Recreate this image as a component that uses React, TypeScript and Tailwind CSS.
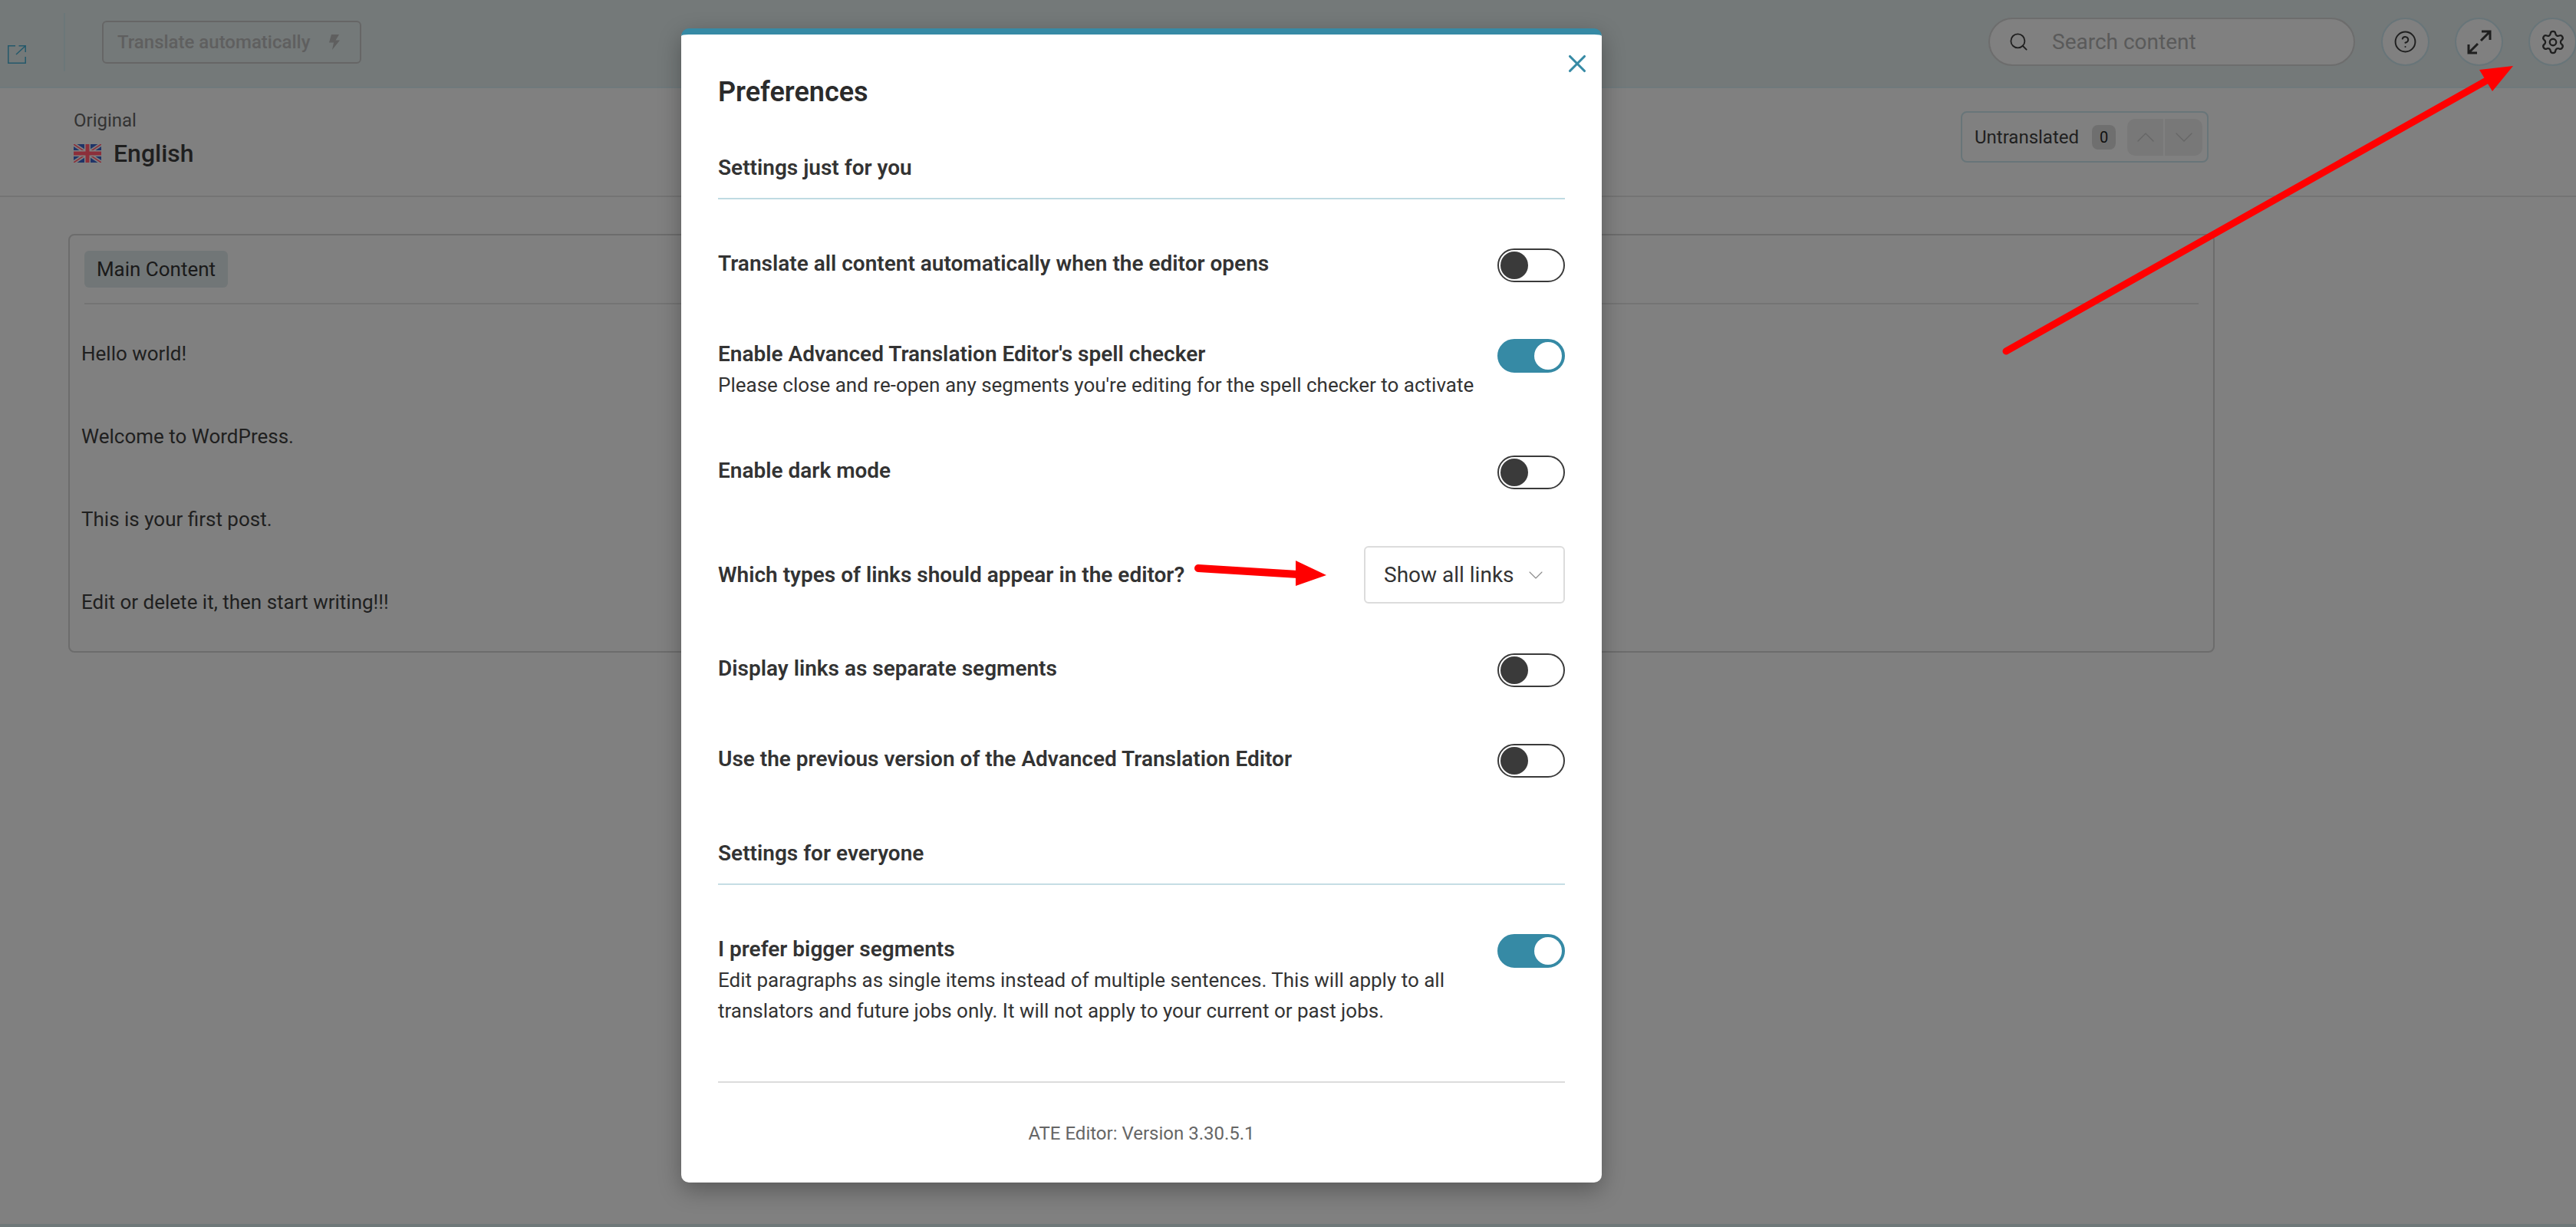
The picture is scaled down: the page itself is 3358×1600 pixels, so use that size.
import React from 'react';
import { ChevronDown, ChevronUp, CircleHelp, Search, Settings, X } from 'lucide-react';

const Toggle: React.FC<{ on?: boolean }> = ({ on }) => (
  <div
    className={`shrink-0 w-[88px] h-[44px] rounded-full border-2 p-[2px] flex ${
      on ? 'bg-[#368aa5] border-[#368aa5] justify-end' : 'bg-white border-[#3a3a3a] justify-start'
    }`}
  >
    <div className={`w-[36px] h-[36px] rounded-full ${on ? 'bg-white' : 'bg-[#3a3a3a]'}`} />
  </div>
);

const Row: React.FC<{ label: string; on?: boolean; className: string; children?: React.ReactNode }> = ({
  label,
  on,
  className,
  children,
}) => (
  <div className={`flex justify-between items-start ${className}`}>
    <div className="w-[960px]">
      <div className="text-[28px] leading-[40px] font-semibold text-[#333333] whitespace-nowrap">{label}</div>
      {children && <div className="text-[26px] leading-[40px] text-[#333333]">{children}</div>}
    </div>
    <Toggle on={on} />
  </div>
);

const Flag = () => (
  <svg width="36" height="24" viewBox="0 0 36 24" className="shrink-0">
    <rect width="36" height="24" fill="#1f3468" />
    <path d="M0 0L36 24M36 0L0 24" stroke="#808080" strokeWidth="5" />
    <path d="M0 0L36 24M36 0L0 24" stroke="#8c2f3a" strokeWidth="1.6" />
    <path d="M18 0V24M0 12H36" stroke="#808080" strokeWidth="8" />
    <path d="M18 0V24M0 12H36" stroke="#8c2f3a" strokeWidth="5" />
  </svg>
);

const segments = ['Hello world!', 'Welcome to WordPress.', 'This is your first post.', 'Edit or delete it, then start writing!!!'];

export default function App() {
  return (
    <div className="relative w-[3358px] h-[1600px] overflow-hidden bg-[#808080] font-['Roboto',sans-serif] text-[26px] text-[#1f1f1f]">
      {/* top bar */}
      <div className="h-[115px] bg-[#747979] border-b-2 border-[#6f797c] flex items-start pl-[10px]">
        <svg width="24" height="24" viewBox="0 0 24 24" fill="none" stroke="#24596b" strokeWidth="1.5" className="mt-[59px] shrink-0">
          <path d="M10 .8H.8V23.2H23.2V15" />
          <path d="M11 12L23 1M14.5 .8H23.2V9" />
        </svg>
        <div className="ml-[49px] mt-[17px] w-[2px] h-[76px] bg-[#6c7779]" />
        <div className="ml-[48px] mt-[27px] w-[338px] h-[56px] rounded-[6px] border-2 border-[#666666] flex items-center justify-between pl-[18px] pr-[26px]">
          <span className="text-[24px] font-medium text-[#5f5f5f]">Translate automatically</span>
          <svg width="15" height="20" viewBox="0 0 15 20" fill="#5f5f5f">
            <path d="M4 0H14L9.5 7.5H15L5 20L7 10.5H1Z" />
          </svg>
        </div>
        <div className="ml-auto mr-[-1px] mt-[23px] flex items-center">
          <div className="w-[478px] h-[63px] rounded-full border-2 border-[#6d6d6d] bg-[#808080] flex items-center pl-[24px]">
            <Search size={27} strokeWidth={1.6} className="text-[#1f1f1f] shrink-0" />
            <span className="ml-[30px] text-[28px] text-[#5a5a5a]">Search content</span>
          </div>
          <div className="ml-[34px] w-[63px] h-[63px] rounded-full border-2 border-[#687579] bg-[#808080] flex items-center justify-center">
            <CircleHelp size={31} strokeWidth={1.5} className="text-[#1f1f1f]" />
          </div>
          <div className="ml-[33px] w-[63px] h-[63px] rounded-full border-2 border-[#687579] bg-[#808080] flex items-center justify-center">
            <svg width="32" height="32" viewBox="0 0 32 32" fill="none" stroke="#1f1f1f" strokeWidth="3">
              <path d="M18 14L30 2M19 2H30V13" />
              <path d="M14 18L2 30M13 30H2V19" />
            </svg>
          </div>
          <div className="ml-[33px] w-[63px] h-[63px] rounded-full border-2 border-[#687579] bg-[#808080] flex items-center justify-center">
            <Settings size={34} strokeWidth={1.6} className="text-[#1f1f1f]" />
          </div>
        </div>
      </div>

      {/* language row */}
      <div className="h-[142px] border-b-2 border-[#747474] pl-[96px] pr-[479px] flex justify-between">
        <div>
          <div className="mt-[26px] text-[24px] leading-[32px] text-[#333333]">Original</div>
          <div className="mt-[7px] flex items-center gap-[16px]">
            <Flag />
            <span className="text-[32px] leading-[40px] font-medium text-[#1f1f1f]">English</span>
          </div>
        </div>
        <div className="mt-[30px] w-[323px] h-[67px] rounded-[8px] border-2 border-[#687579] flex items-center pl-[16px]">
          <span className="text-[24px] text-[#1f1f1f]">Untranslated</span>
          <span className="ml-[17px] w-[31px] h-[32px] rounded-[8px] bg-[#6f6f6f] flex items-center justify-center text-[20px] text-[#111111]">0</span>
          <div className="ml-[15px] w-[98px] h-[48px] rounded-[10px] bg-[#787878] flex">
            <div className="w-1/2 border-r-2 border-[#808080] flex items-center justify-center">
              <ChevronUp size={40} strokeWidth={0.8} className="text-[#666666]" />
            </div>
            <div className="w-1/2 flex items-center justify-center">
              <ChevronDown size={40} strokeWidth={0.8} className="text-[#666666]" />
            </div>
          </div>
        </div>
      </div>

      {/* content box */}
      <div className="ml-[89px] mt-[48px] w-[2798px] h-[546px] rounded-[8px] border-2 border-[#6c6c6c] px-[19px] pt-[20px]">
        <div className="border-b-2 border-[#747474] h-[70px]">
          <span className="inline-block w-[187px] h-[48px] rounded-[6px] bg-[#717677] text-center leading-[48px] text-[26px] text-[#1a1a1a]">
            Main Content
          </span>
        </div>
        <div className="mt-[44px] -ml-[4px] flex flex-col gap-[68px]">
          {segments.map(s => (
            <div key={s} className="leading-[40px] text-[#1f1f1f]">
              {s}
            </div>
          ))}
        </div>
      </div>

      {/* bottom edge of the page */}
      <div className="absolute left-0 right-0 bottom-0 h-[4px] bg-[#6f7879]" />

      {/* dialog */}
      <div className="absolute left-[888px] top-[37px] w-[1200px] h-[1505px] bg-white rounded-[10px] border-t-[8px] border-[#368aa5] px-[48px] shadow-[0_10px_30px_rgba(0,0,0,0.3)]">
        <X size={38} strokeWidth={2} className="absolute right-[13px] top-[19px] text-[#368aa5]" />
        <div className="pt-[55px] text-[36px] leading-[40px] font-semibold text-[#2b2b2b]">Preferences</div>

        <div className="mt-[63px] pb-[23px] border-b-2 border-[#bfdbe2] text-[28px] leading-[32px] font-semibold text-[#333333]">
          Settings just for you
        </div>
        <Row className="mt-[64px]" label="Translate all content automatically when the editor opens" />
        <Row className="mt-[74px]" on label="Enable Advanced Translation Editor's spell checker">
          <span className="whitespace-nowrap">Please close and re-open any segments you're editing for the spell checker to activate</span>
        </Row>
        <Row className="mt-[72px]" label="Enable dark mode" />

        <div className="mt-[74px] flex justify-between items-center">
          <div className="text-[28px] font-semibold text-[#333333]">Which types of links should appear in the editor?</div>
          <div className="w-[262px] h-[75px] rounded-[6px] border-2 border-[#dcdcdc] flex items-center pl-[24px]">
            <span className="text-[28px] text-[#333333]">Show all links</span>
            <ChevronDown size={32} strokeWidth={0.8} className="ml-[12px] text-[#8a8a8a]" />
          </div>
        </div>

        <Row className="mt-[65px]" label="Display links as separate segments" />
        <Row className="mt-[74px]" label="Use the previous version of the Advanced Translation Editor" />

        <div className="mt-[83px] pb-[23px] border-b-2 border-[#c5dde4] text-[28px] leading-[32px] font-semibold text-[#333333]">
          Settings for everyone
        </div>
        <Row className="mt-[64px]" on label="I prefer bigger segments">
          Edit paragraphs as single items instead of multiple sentences. This will apply to all translators and future jobs only. It will not apply to your current or past jobs.
        </Row>

        <div className="mt-[72px] border-t-2 border-[#dcdcdc] pt-[50px] text-center text-[24px] leading-[32px] text-[#666666]">
          ATE Editor: Version 3.30.5.1
        </div>
      </div>

      {/* red callout arrows */}
      <svg width="3358" height="1600" viewBox="0 0 3358 1600" className="absolute left-0 top-0 pointer-events-none">
        <path d="M2615 458L3245 103" stroke="#ff0000" strokeWidth="9" strokeLinecap="round" />
        <path d="M3232 91L3276 86L3249 119Z" fill="#ff0000" />
        <path d="M1562 741L1692 749" stroke="#ff0000" strokeWidth="10" strokeLinecap="round" />
        <path d="M1689 731L1729 750L1689 764Z" fill="#ff0000" />
      </svg>
    </div>
  );
}
